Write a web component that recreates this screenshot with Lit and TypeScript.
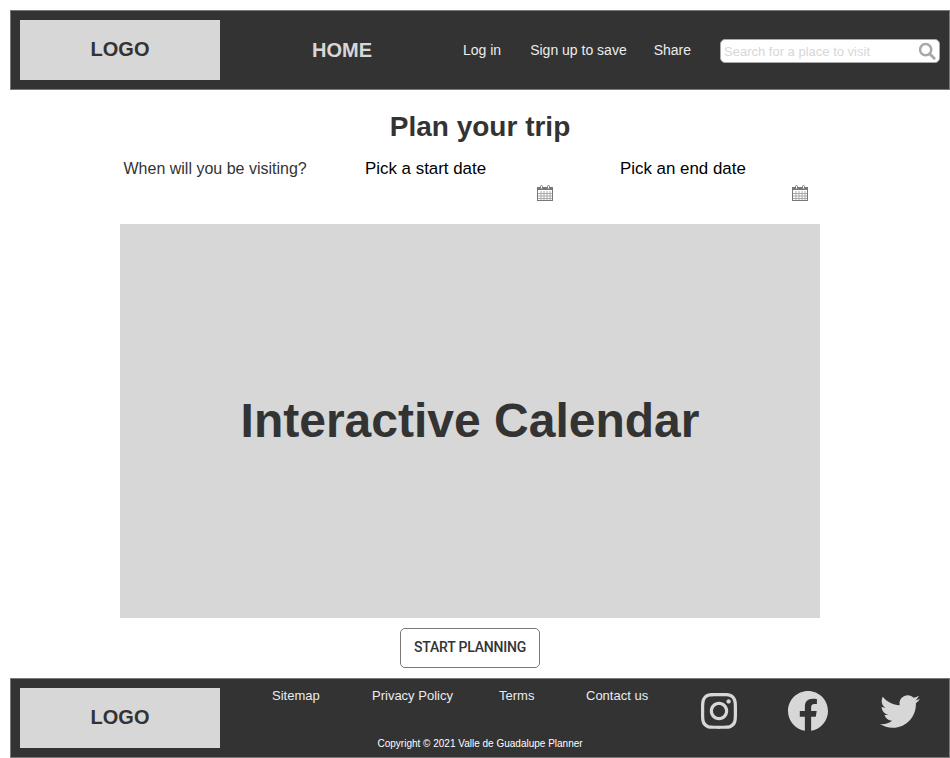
import { LitElement, html, css, svg } from "lit";
import { customElement } from "lit/decorators.js";

const calendar = svg`<svg class="cal" viewBox="0 0 16 16" width="16" height="16" aria-hidden="true">
  <rect x="0.5" y="2.5" width="15" height="13" fill="#fff" stroke="#777"/>
  <path d="M1 4h14" stroke="#777" stroke-width="2" fill="none"/>
  <path d="M1 8.5h14M1 11h14M1 13.5h14M4 6v9M7 6v9M10 6v9M13 6v9" stroke="#aaa" stroke-width="1" fill="none"/>
  <path d="M3.5 3.5V1.5a1 1 0 0 1 2 0v2M10.5 3.5V1.5a1 1 0 0 1 2 0v2" stroke="#777" fill="#fff"/>
</svg>`;

@customElement("app-root")
export class AppRoot extends LitElement {
  static styles = css`
    :host {
      display: block;
      width: 950px;
      height: 758px;
      box-sizing: border-box;
      padding-top: 10px;
      overflow: hidden;
      background: #fff;
      font-family: "Liberation Sans", Arial, sans-serif;
      color: #333;
    }
    .bar {
      box-sizing: border-box;
      margin-left: 10px;
      width: 940px;
      height: 80px;
      background: #333;
      border: 1px solid #797979;
      display: flex;
      align-items: center;
    }
    .logo {
      flex: none;
      width: 200px;
      height: 60px;
      margin-left: 9px;
      padding-bottom: 1px;
      box-sizing: border-box;
      background: #d7d7d7;
      display: flex;
      align-items: center;
      justify-content: center;
      font-weight: 700;
      font-size: 20px;
      color: #333;
    }
    .home {
      margin-left: 92px;
      font-size: 20px;
      font-weight: 700;
      color: #d7d7d7;
      width: 151px;
      flex: none;
    }
    .nav {
      font-size: 14px;
      color: #ececec;
      white-space: nowrap;
    }
    .login { margin-right: 29px; }
    .signup { margin-right: 27px; }
    .share { margin-right: 29px; }
    .search {
      box-sizing: border-box;
      flex: none;
      width: 220px;
      height: 24px;
      margin-top: 2px;
      background: #fff;
      border: 1px solid #a8a8a8;
      border-radius: 5px;
      display: flex;
      align-items: center;
      justify-content: space-between;
      padding: 0 3px 0 3px;
      font-size: 13px;
      color: #d7d7d7;
    }
    .search svg { display: block; }
    main {
      display: flex;
      flex-direction: column;
      align-items: center;
    }
    h1 {
      margin: 20px 0 0 10px;
      font-size: 28px;
      line-height: 34px;
      font-weight: 700;
      color: #333;
    }
    .dates {
      width: 700px;
      height: 80px;
      margin-left: -10px;
      padding-top: 15px;
      box-sizing: border-box;
      display: grid;
      grid-template-columns: 241px 255px 204px;
      font-size: 16px;
      line-height: 20px;
    }
    .visit { padding-left: 3.5px; color: #333; }
    .picker { color: #000; font-size: 16.9px; }
    .pick-a { padding-left: 4px; }
    .pick-b { padding-left: 4px; }
    .picker .row {
      display: flex;
      justify-content: flex-end;
      margin-top: 6px;
    }
    .pick-a .row { padding-right: 63px; }
    .pick-b .row { padding-right: 12px; }
    .cal { display: block; }
    .canvas {
      box-sizing: border-box;
      width: 700px;
      height: 394px;
      margin-left: -10px;
      padding-bottom: 2px;
      background: #d7d7d7;
      display: flex;
      align-items: center;
      justify-content: center;
      font-size: 48px;
      font-weight: 700;
      color: #333;
    }
    .cta {
      box-sizing: border-box;
      width: 140px;
      height: 40px;
      margin: 10px 0 10px -10px;
      background: #fff;
      border: 1px solid #797979;
      border-radius: 5px;
      padding: 0 0 2px;
      font-family: Roboto, "Liberation Sans", sans-serif;
      font-weight: 500;
      font-size: 14px;
      letter-spacing: -0.2px;
      color: #333;
    }
    .links {
      flex: 1;
      align-self: stretch;
      display: flex;
      flex-direction: column;
      min-width: 0;
    }
    .link-row {
      display: flex;
      margin-top: 9px;
      margin-left: 52px;
      font-size: 13px;
      line-height: 16px;
      color: #ececec;
    }
    .link-row span { white-space: nowrap; }
    .l1 { width: 100px; }
    .l2 { width: 127px; }
    .l3 { width: 87px; }
    .copy {
      margin-top: 32px;
      margin-left: 157.5px;
      font-size: 10px;
      line-height: 16px;
      color: #fff;
      white-space: nowrap;
    }
    .social {
      display: flex;
      align-items: center;
      align-self: flex-start;
      margin-top: 12px;
      flex: none;
    }
    .social svg { display: block; fill: #d7d7d7; }
    .ig { margin-right: 51px; }
    .fb { margin-right: 52px; }
    .tw { margin-right: 29px; }
  `;

  render() {
    return html`
      <header class="bar">
        <div class="logo">LOGO</div>
        <div class="home">HOME</div>
        <span class="nav login">Log in</span>
        <span class="nav signup">Sign up to save</span>
        <span class="nav share">Share</span>
        <div class="search">
          <span>Search for a place to visit</span>
          <svg viewBox="0 0 20 20" width="18" height="18" aria-hidden="true">
            <circle cx="8.5" cy="8.5" r="6.2" fill="none" stroke="#a8a8a8" stroke-width="2.8"/>
            <path d="M13 13l5 5" stroke="#a8a8a8" stroke-width="3.2" stroke-linecap="round"/>
          </svg>
        </div>
      </header>
      <main>
        <h1>Plan your trip</h1>
        <div class="dates">
          <div class="visit">When will you be visiting?</div>
          <div class="picker pick-a">Pick a start date<div class="row">${calendar}</div></div>
          <div class="picker pick-b">Pick an end date<div class="row">${calendar}</div></div>
        </div>
        <div class="canvas">Interactive Calendar</div>
        <button class="cta">START PLANNING</button>
      </main>
      <footer class="bar">
        <div class="logo">LOGO</div>
        <div class="links">
          <div class="link-row">
            <span class="l1">Sitemap</span>
            <span class="l2">Privacy Policy</span>
            <span class="l3">Terms</span>
            <span>Contact us</span>
          </div>
          <div class="copy">Copyright © 2021 Valle de Guadalupe Planner</div>
        </div>
        <div class="social">
          <svg class="ig" viewBox="0 32 448 448" width="36" height="36" aria-hidden="true"><path d="M224.1 141c-63.6 0-114.9 51.3-114.9 114.9s51.3 114.9 114.9 114.9S339 319.5 339 255.9 287.7 141 224.1 141zm0 189.6c-41.1 0-74.7-33.5-74.7-74.7s33.5-74.7 74.7-74.7 74.7 33.5 74.7 74.7-33.6 74.7-74.7 74.7zm146.4-194.3c0 14.9-12 26.8-26.8 26.8-14.9 0-26.8-12-26.8-26.8s12-26.8 26.8-26.8 26.8 12 26.8 26.8zm76.1 27.2c-1.7-35.9-9.9-67.7-36.2-93.9-26.2-26.2-58-34.4-93.9-36.2-37-2.1-147.9-2.1-184.9 0-35.8 1.7-67.6 9.9-93.9 36.1s-34.4 58-36.2 93.9c-2.1 37-2.1 147.9 0 184.9 1.7 35.9 9.9 67.7 36.2 93.9s58 34.4 93.9 36.2c37 2.1 147.9 2.1 184.9 0 35.9-1.7 67.7-9.9 93.9-36.2 26.2-26.2 34.4-58 36.2-93.9 2.1-37 2.1-147.8 0-184.8zM398.8 388c-7.8 19.6-22.9 34.7-42.6 42.6-29.5 11.7-99.5 9-132.1 9s-102.7 2.6-132.1-9c-19.6-7.8-34.7-22.9-42.6-42.6-11.7-29.5-9-99.5-9-132.1s-2.6-102.7 9-132.1c7.8-19.6 22.9-34.7 42.6-42.6 29.5-11.7 99.5-9 132.1-9s102.7-2.6 132.1 9c19.6 7.8 34.7 22.9 42.6 42.6 11.7 29.5 9 99.5 9 132.1s2.7 102.7-9 132.1z"/></svg>
          <svg class="fb" viewBox="8 8 496 496" width="40" height="40" aria-hidden="true"><path d="M504 256C504 119 393 8 256 8S8 119 8 256c0 123.78 90.69 226.38 209.25 245V327.69h-63V256h63v-54.64c0-62.15 37-96.48 93.67-96.48 27.14 0 55.52 4.84 55.52 4.84v61h-31.28c-30.8 0-40.41 19.12-40.41 38.73V256h68.78l-11 71.69h-57.78V501C413.31 482.38 504 379.78 504 256z"/></svg>
          <svg class="tw" viewBox="0 48 512 416" width="40" height="33" aria-hidden="true"><path d="M459.37 151.716c.325 4.548.325 9.097.325 13.645 0 138.72-105.583 298.558-298.558 298.558-59.452 0-114.68-17.219-161.137-47.106 8.447.974 16.568 1.299 25.34 1.299 49.055 0 94.213-16.568 130.274-44.832-46.132-.975-84.792-31.188-98.112-72.772 6.498.974 12.995 1.624 19.818 1.624 9.421 0 18.843-1.3 27.614-3.573-48.081-9.747-84.143-51.98-84.143-102.985v-1.299c13.969 7.797 30.214 12.67 47.431 13.319-28.264-18.843-46.781-51.005-46.781-87.391 0-19.492 5.197-37.36 14.294-52.954 51.655 63.675 129.3 105.258 216.365 109.807-1.624-7.797-2.599-15.918-2.599-24.04 0-57.828 46.782-104.934 104.934-104.934 30.213 0 57.502 12.67 76.67 33.137 23.715-4.548 46.456-13.32 66.599-25.34-7.798 24.366-24.366 44.833-46.132 57.827 21.117-2.273 41.584-8.122 60.426-16.243-14.292 20.791-32.161 39.308-52.628 54.253z"/></svg>
        </div>
      </footer>
    `;
  }
}
